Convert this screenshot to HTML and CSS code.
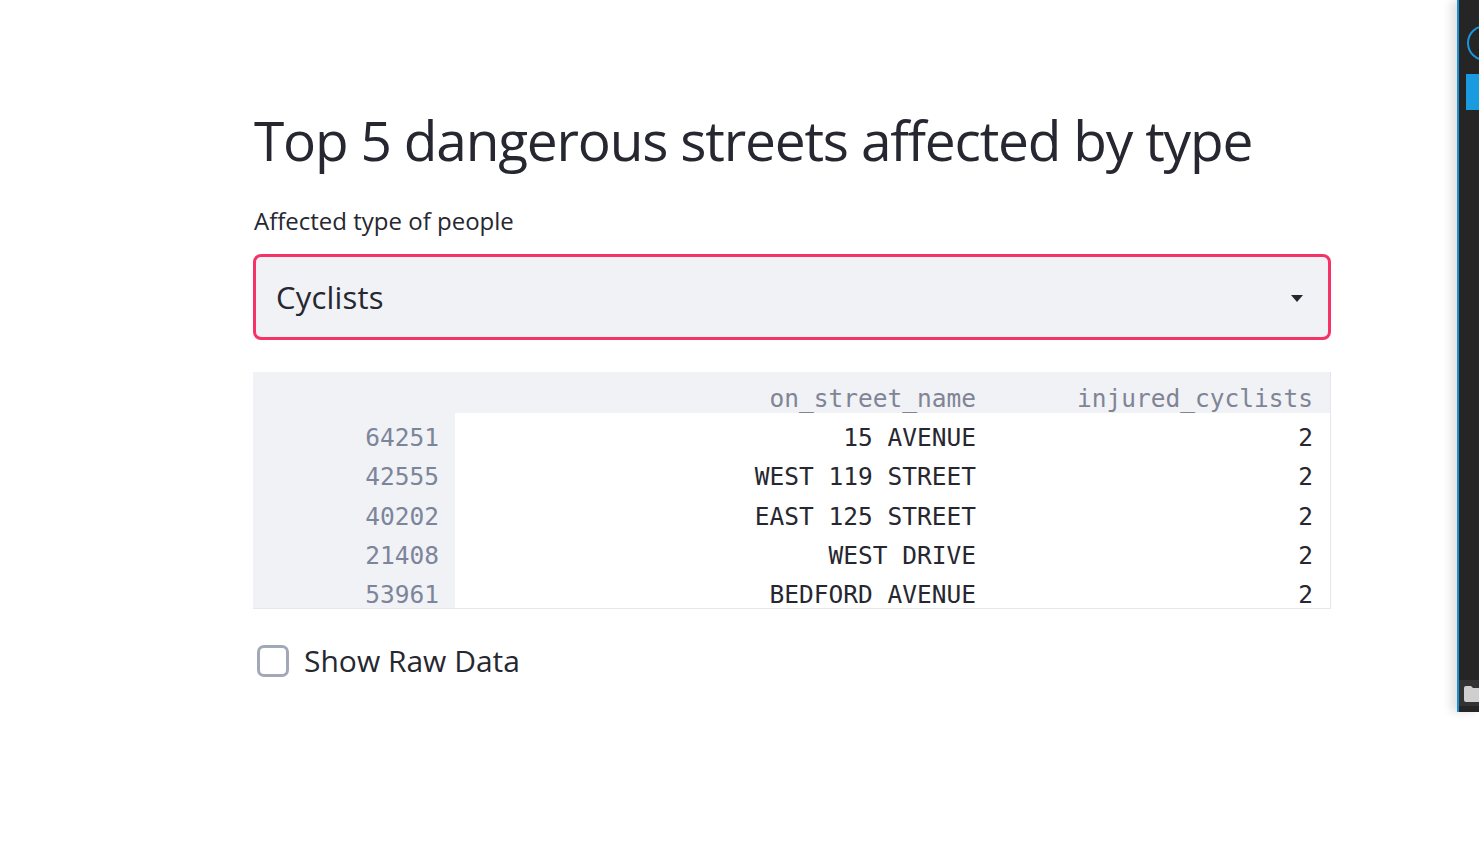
FILE: index.html
```html
<!DOCTYPE html>
<html>
<head>
<meta charset="utf-8">
<link rel="stylesheet" href="styles.css">
</head>
<body>
<main class="page">
  <h1 class="title">Top 5 dangerous streets affected by type</h1>
  <label class="label">Affected type of people</label>
  <div class="select">
    <span class="select-value">Cyclists</span>
    <svg class="caret" width="12" height="7" viewBox="0 0 12 7"><path d="M0 0h12L6 7z" fill="#262730"/></svg>
  </div>
  <div class="table">
    <div class="row head">
      <div class="cell idx"></div>
      <div class="cell">on_street_name</div>
      <div class="cell">injured_cyclists</div>
    </div>
    <div class="row">
      <div class="cell idx">64251</div>
      <div class="cell">15 AVENUE</div>
      <div class="cell">2</div>
    </div>
    <div class="row">
      <div class="cell idx">42555</div>
      <div class="cell">WEST 119 STREET</div>
      <div class="cell">2</div>
    </div>
    <div class="row">
      <div class="cell idx">40202</div>
      <div class="cell">EAST 125 STREET</div>
      <div class="cell">2</div>
    </div>
    <div class="row">
      <div class="cell idx">21408</div>
      <div class="cell">WEST DRIVE</div>
      <div class="cell">2</div>
    </div>
    <div class="row">
      <div class="cell idx">53961</div>
      <div class="cell">BEDFORD AVENUE</div>
      <div class="cell">2</div>
    </div>
  </div>
  <label class="check">
    <span class="box"></span>
    <span class="check-text">Show Raw Data</span>
  </label>
</main>
<aside class="side-window">
  <div class="ring"></div>
  <div class="blue-tab"></div>
  <div class="bottom-strip">
    <svg class="folder" width="20" height="16" viewBox="0 0 20 16"><path d="M0 2q0-2 2-2h5l2 2h9q2 0 2 2v10q0 2-2 2H2q-2 0-2-2z" fill="#cfcfcf"/></svg>
  </div>
</aside>
</body>
</html>
```
FILE: styles.css
```css
html, body {
  margin: 0;
  padding: 0;
  background: #ffffff;
  overflow: hidden;
}
body {
  width: 1479px;
  height: 862px;
  font-family: "Open Sans", "Noto Sans", sans-serif;
  color: #262730;
}
.page {
  width: 1078px;
  margin-left: 253px;
  padding-top: 100px;
  display: flex;
  flex-direction: column;
}
.title {
  margin: 0 0 0 1px;
  font-weight: 400;
  font-size: 55px;
  line-height: 80px;
  letter-spacing: -1.2px;
  color: #262730;
}
.label {
  margin: 24px 0 0 1px;
  font-size: 24px;
  line-height: 34px;
  color: #262730;
}
.select {
  margin-top: 16px;
  height: 80px;
  border: 3px solid #f63366;
  border-radius: 8px;
  background: #f0f2f6;
  display: flex;
  align-items: center;
  justify-content: space-between;
  padding: 0 25px 0 20px;
}
.select-value {
  font-size: 31px;
  letter-spacing: 0.2px;
}
.caret {
  margin-top: 2px;
}
.table {
  margin-top: 32px;
  height: 237px;
  overflow: hidden;
  background: #f0f2f6;
  border-right: 1px solid #e4e7ee;
  border-bottom: 1px solid #e4e7ee;
  box-sizing: border-box;
  font-family: "DejaVu Sans Mono", "Liberation Mono", monospace;
  font-size: 24.5px;
}
.row {
  display: grid;
  grid-template-columns: 202px 537px 1fr;
  height: 39.25px;
}
.row.head {
  height: 41px;
}
.cell {
  box-sizing: border-box;
  background: #ffffff;
  text-align: right;
  padding: 10px 16px 0 0;
  line-height: 30px;
  white-space: nowrap;
  color: #262730;
}
.row.head .cell {
  padding-top: 12px;
  background: #f0f2f6;
  color: #808495;
}
.cell.idx {
  background: #f0f2f6;
  color: #7d859b;
}
.cell:last-child {
  padding-right: 17px;
}
.check {
  margin-top: 32px;
  display: flex;
  align-items: center;
  gap: 15px;
  margin-left: 4px;
}
.box {
  width: 26px;
  height: 26px;
  border: 3px solid #a3a8b8;
  border-radius: 7px;
  background: #ffffff;
}
.check-text {
  font-size: 30px;
  line-height: 40px;
}
.side-window {
  position: absolute;
  left: 1457px;
  top: 0;
  width: 22px;
  height: 712px;
  background: #252526;
  border-left: 2px solid #1b8fd6;
  box-shadow: -6px 0 10px rgba(0,0,0,0.12);
  overflow: hidden;
}
.ring {
  position: absolute;
  left: 8px;
  top: 25px;
  width: 32px;
  height: 32px;
  border: 2px solid #1a95dd;
  border-radius: 50%;
}
.blue-tab {
  position: absolute;
  left: 7px;
  top: 74px;
  width: 30px;
  height: 36px;
  background: #1a9be0;
}
.bottom-strip {
  position: absolute;
  left: 0;
  top: 680px;
  width: 100%;
  height: 26px;
  background: #333333;
}
.folder {
  position: absolute;
  left: 5px;
  top: 6px;
}
```
